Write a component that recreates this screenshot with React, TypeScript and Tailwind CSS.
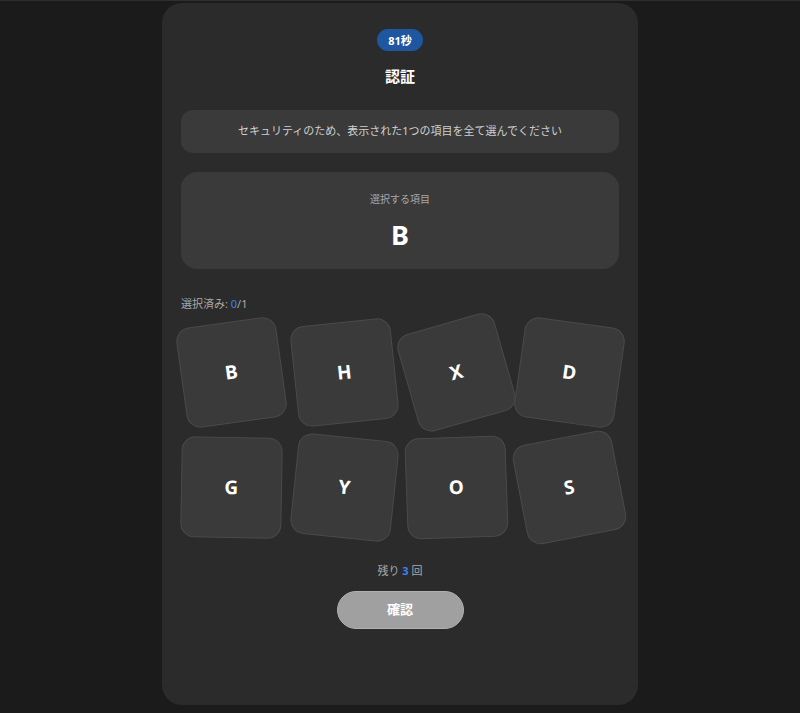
import React from "react";

const tiles: { l: string; r: string }[] = [
  { l: "B", r: "-rotate-[8deg]" },
  { l: "H", r: "-rotate-[6deg]" },
  { l: "X", r: "-rotate-[16deg]" },
  { l: "D", r: "rotate-[8deg]" },
  { l: "G", r: "rotate-[1deg]" },
  { l: "Y", r: "rotate-[6deg]" },
  { l: "O", r: "-rotate-[2deg]" },
  { l: "S", r: "-rotate-[11deg]" },
];

export default function App() {
  return (
    <div
      className="min-h-screen bg-[#1b1b1b] border-t border-[#2e2e2e] flex justify-center pt-[2px]"
      style={{ fontFamily: '"Noto Sans", "Noto Sans CJK JP", sans-serif' }}
    >
      <div className="w-[476px] h-[702px] bg-[#2b2b2b] rounded-[20px] px-[19px] pt-[26px] flex flex-col items-center">
        <div className="h-[22px] w-[46px] rounded-full bg-[#1f56a0] text-white text-[11px] font-bold flex items-center justify-center leading-none">
          81秒
        </div>
        <h1 className="mt-[13px] text-[15px] leading-[24px] font-bold text-white">認証</h1>
        <div className="mt-[22px] w-full h-[43px] rounded-[12px] bg-[#3a3a3a] flex items-center justify-center text-[11px] text-[#d0d0d0]">
          セキュリティのため、表示された1つの項目を全て選んでください
        </div>
        <div className="mt-[19px] w-full h-[97px] rounded-[16px] bg-[#3a3a3a] flex flex-col items-center pt-[19px]">
          <div className="text-[10px] leading-[16px] text-[#a8a8a8]">選択する項目</div>
          <div className="mt-[12px] text-[27px] leading-[32px] font-bold text-white">B</div>
        </div>
        <div className="mt-[27px] w-full text-[11px] leading-[16px] text-[#a8a8a8]">
          選択済み: <span className="text-[#3b82f6]">0</span>/1
        </div>
        <div className="mt-[10px] w-full grid grid-cols-4 gap-x-[12px] gap-y-[14px]">
          {tiles.map((t) => (
            <div
              key={t.l}
              className={`h-[101px] rounded-[14px] bg-[#3a3a3a] border border-[#4a4a4a] flex items-center justify-center text-[19px] font-bold text-white ${t.r}`}
            >
              {t.l}
            </div>
          ))}
        </div>
        <div className="mt-[25px] text-[11px] leading-[16px] text-[#a8a8a8]">
          残り <span className="text-[#3b82f6] font-bold">3</span> 回
        </div>
        <button className="mt-[12px] w-[127px] h-[38px] rounded-full bg-[#a0a0a0] border border-[#b0b0b0] text-white text-[13px] font-bold">
          確認
        </button>
      </div>
    </div>
  );
}
